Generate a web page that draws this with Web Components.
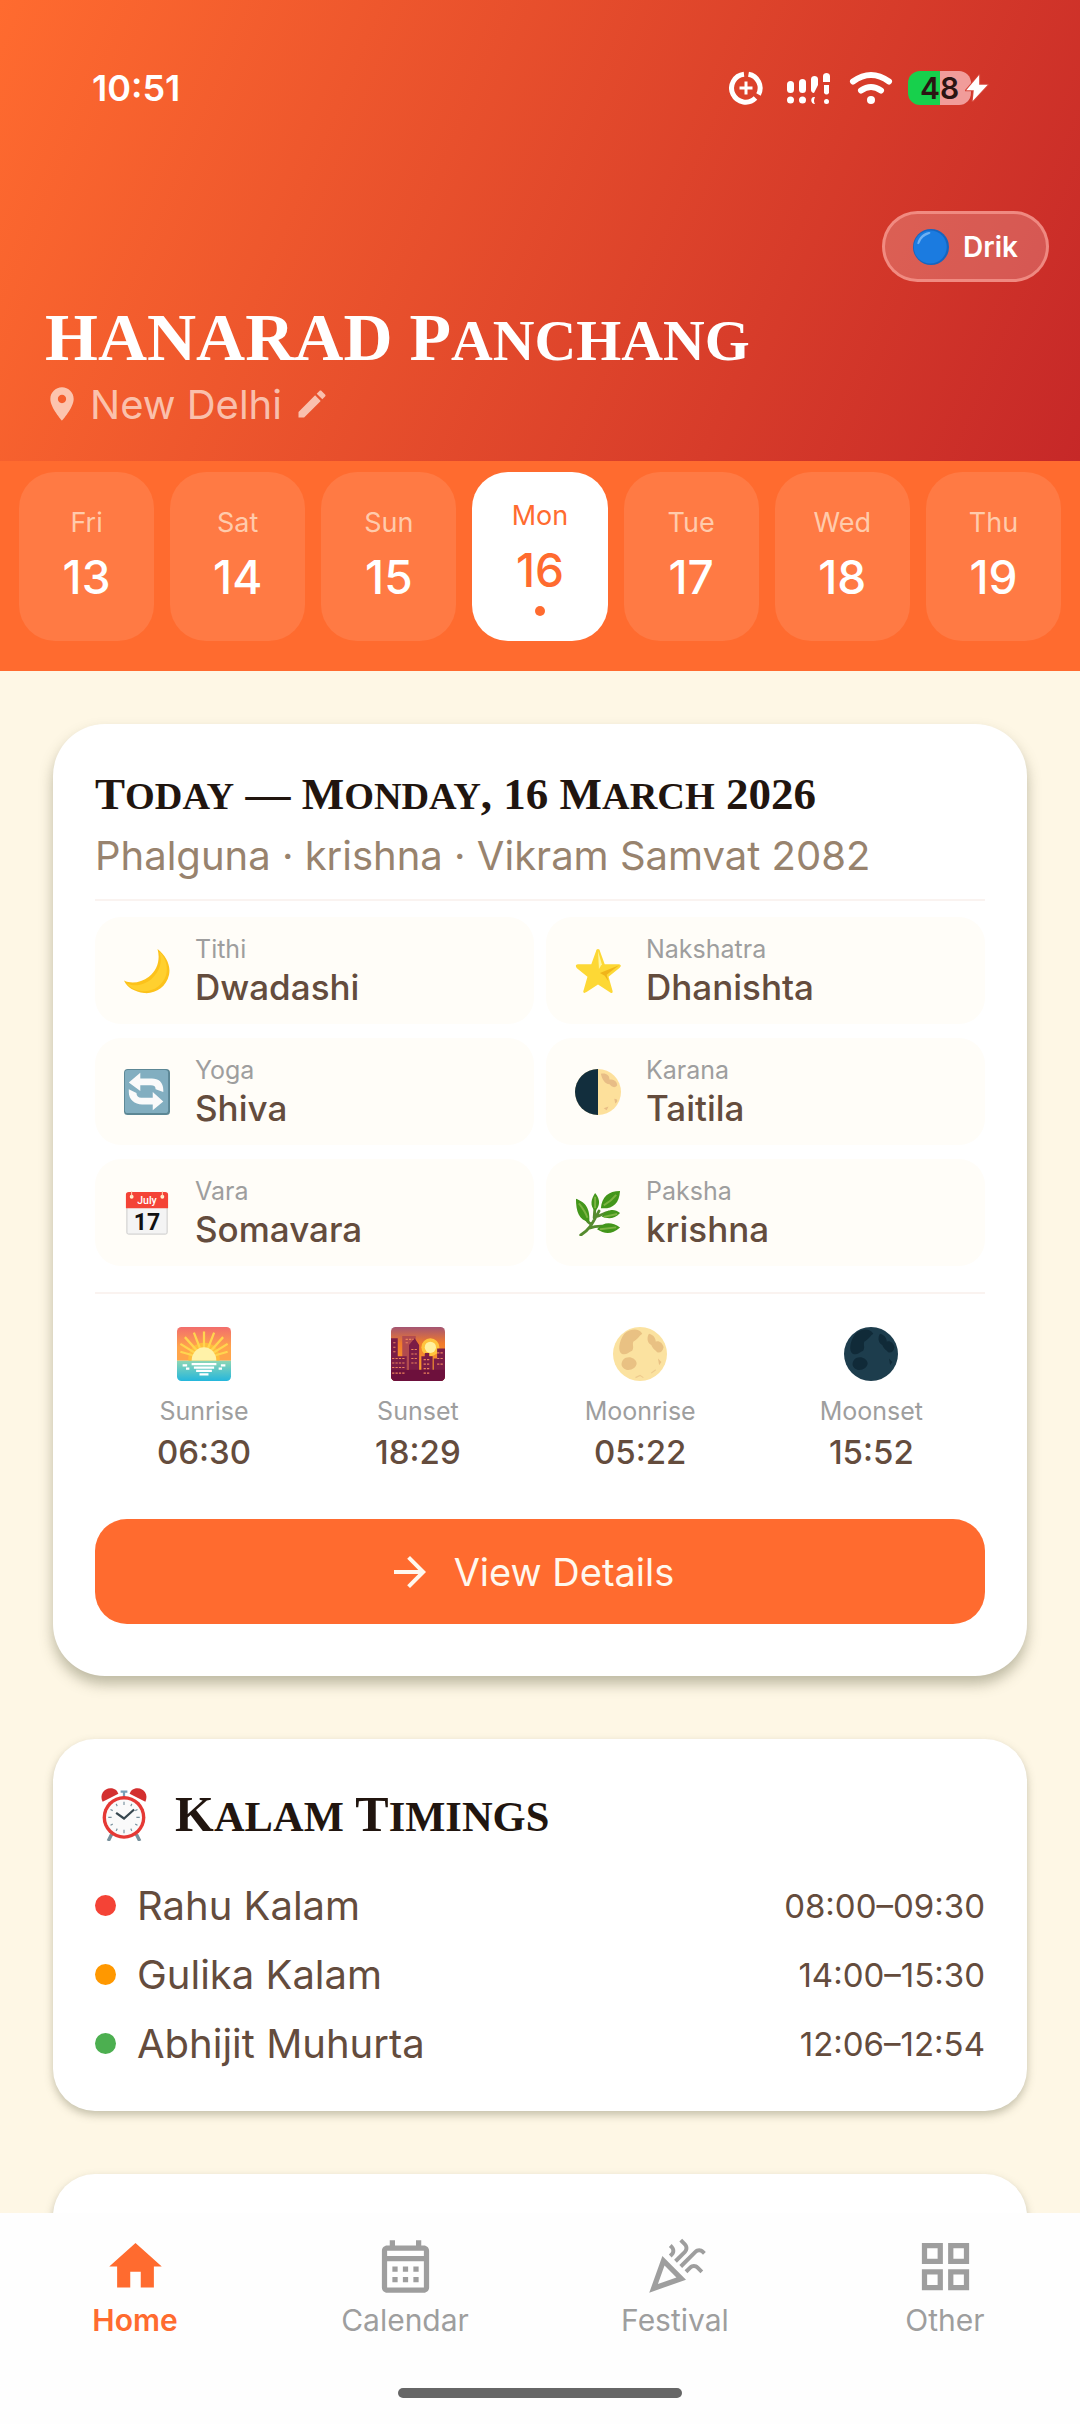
<!DOCTYPE html>
<html lang="en">
<head>
<meta charset="utf-8">
<meta name="viewport" content="width=device-width, initial-scale=1">
<title>HANARAD Panchang</title>
<style>
    body {
        margin: 0;
        background: #fef7e5;
        font-family: Inter, "Open Sans", sans-serif;
        --orange: #ff6b2f;
        --brown: #644c3d;
        --grey: #9e9e9e;
        --serif: "Liberation Serif", serif;
    }
</style>
</head>
<body>
<panchang-app></panchang-app>

<script>
// one colour icons, 24x24 grid
const glyphs = {
    home: "M10 20v-6h4v6h5v-8h3L12 3 2 12h3v8z",
    calendar: "M19 4h-1V2h-2v2H8V2H6v2H5c-1.11 0-1.99.9-1.99 2L3 20c0 1.1.89 2 2 2h14c1.1 0 2-.9 2-2V6c0-1.1-.9-2-2-2zm0 16H5V10h14v10zm0-12H5V6h14v2zM9 14H7v-2h2v2zm4 0h-2v-2h2v2zm4 0h-2v-2h2v2zm-8 4H7v-2h2v2zm4 0h-2v-2h2v2zm4 0h-2v-2h2v2z",
    festival: "M2 22l14-5-9-9-5 14zm10.35-5.82L5.3 18.7l2.52-7.05 4.53 4.53zM14.53 12.53l5.59-5.59c.49-.49 1.28-.49 1.77 0l.59.59 1.06-1.06-.59-.59c-1.07-1.07-2.82-1.07-3.89 0l-5.59 5.59 1.06 1.06zM10.06 6.88l-.59.59 1.06 1.06.59-.59c1.07-1.07 1.07-2.82 0-3.89l-.59-.59-1.06 1.07.59.59c.48.48.48 1.28 0 1.76zM17.06 11.88l-1.59 1.59 1.06 1.06 1.59-1.59c.49-.49 1.28-.49 1.77 0l1.61 1.61 1.06-1.06-1.61-1.61c-1.08-1.07-2.82-1.07-3.89 0zM15.06 5.88l-3.59 3.59 1.06 1.06 3.59-3.59c1.07-1.07 1.07-2.82 0-3.89l-1.59-1.59-1.06 1.06 1.59 1.59c.48.49.48 1.29 0 1.77z",
    other: "M3 3v8h8V3H3zm6 6H5V5h4v4zm-6 4v8h8v-8H3zm6 6H5v-4h4v4zm4-16v8h8V3h-8zm6 6h-4V5h4v4zm-6 4v8h8v-8h-8zm6 6h-4v-4h4v4z",
    place: "M12 2C8.13 2 5 5.13 5 9c0 5.25 7 13 7 13s7-7.75 7-13c0-3.87-3.13-7-7-7zm0 9.5c-1.38 0-2.5-1.12-2.5-2.5s1.12-2.5 2.5-2.5 2.5 1.12 2.5 2.5-1.12 2.5-2.5 2.5z",
    edit: "M3 17.25V21h3.75L17.81 9.94l-3.75-3.75L3 17.25zM20.71 7.04c.39-.39.39-1.02 0-1.41l-2.34-2.34c-.39-.39-1.02-.39-1.41 0l-1.83 1.83 3.75 3.75 1.83-1.83z",
    arrow: "M12 4l-1.41 1.41L16.17 11H4v2h12.17l-5.58 5.59L12 20l8-8z"
};

// coloured pictures, 48x48 grid
const pictures = {
    blue: `<circle cx="24" cy="24" r="24" fill="#1565c0"/><circle cx="23" cy="24" r="22" fill="#1b7be0"/><path d="M6 18C8 11 14 5 21 4c3 0 3 2 0 3C15 9 11 13 9 18c-1 3-4 3-3 0z" fill="#6fb1f3"/>`,
    moon: `<path d="M35 1c9 7 14 17 12 27-3 13-14 20-26 19C11 46 3 41 0 34c8 4 18 2 26-4 9-7 12-18 9-29z" fill="#fcc21b"/><path d="M37 4c7 7 9 16 7 24-3 10-12 17-22 17C12 45 6 41 3 37c9 4 19 1 26-5 9-8 11-18 8-28z" fill="#ffd02f"/>`,
    star: `<path d="M24 1c1 0 2 1 2 2l5 14 14 0c3 0 4 2 1 4L35 30l4 14c1 3-1 4-3 2L24 38 12 46c-3 2-4 0-3-2l4-14L2 21c-2-2-1-4 1-4h14l5-14c0-1 1-2 2-2z" fill="#fdd835"/><path d="M46 18 33 28l2 7-4-6-5-3z" fill="#f0b51a"/><path d="M24 3l4 14-3 5z" fill="#fff59d"/>`,
    cycle: `<rect width="48" height="48" rx="4" fill="#5c8795"/><rect x="1" y="1" width="45" height="45" rx="3" fill="#82aec0"/><path d="M17 4v6h12c7 0 12 4 12 12v2l-8-3c0-3-2-4-5-4H17v6L5 14z" fill="#fafafa"/><path d="M30 43v-6H19C11 37 5 32 5 24v-3l8 4c0 3 2 5 5 5h12v-6l11 10z" fill="#fafafa"/>`,
    half: `<circle cx="24" cy="24" r="24" fill="#fde09b"/><path d="M27 5c6-1 9 2 9 6 5 0 8 2 8 6-3 4-6 1-8-1-5 0-8-6-9-11zM41 31c4 0 4 3 1 5zM30 41l5-2-2 4z" fill="#e8bd86"/><path d="M24 0a24 24 0 0 0 0 48z" fill="#122e3d"/>`,
    page: `<path d="M3 4h42v40c0 2-1 2-2 2H5c-1 0-2 0-2-2z" fill="#f4f4f4" stroke="#c9c9c9"/><path d="M5 2h38c2 0 3 1 3 3v14H2V5c0-2 1-3 3-3z" fill="#f44336"/><circle cx="8" cy="7" r="2" fill="#fff4d0"/><circle cx="40" cy="7" r="2" fill="#fff4d0"/><path d="M8 1v6M40 1v6" stroke="#ffd9b8"/><text x="24" y="15" text-anchor="middle" font-family="Roboto" font-size="11" font-weight="500" fill="#fff">July</text><text x="24" y="42" text-anchor="middle" font-family="Roboto" font-size="24" font-weight="700" fill="#111">17</text>`,
    herb: `<path d="M6 47c10-6 13-14 19-25M17 36c-4-2-5-5-8-9M14 40c6-2 10-3 18-2M21 28c6-1 9-4 14-5M20 29l1-13" fill="none" stroke="#558b2f" stroke-width="3" stroke-linecap="round"/><path d="M1 9c8 3 15 8 14 24C4 32 1 22 1 9zM21 3c6 7 5 14 0 19-6-6-4-13 0-19zM47 1c-1 14-8 19-20 18C28 7 35 1 47 1zM47 24c-6 7-13 6-19 4 5-8 13-9 19-4zM47 39c-9 8-16 7-24 2 7-8 15-8 24-2z" fill="#43961b"/><path d="M4 14c4 5 7 9 9 15M43 5c-4 5-8 8-13 11M30 28l14-3M26 41l17-2M21 7v12" fill="none" stroke="#7cb342" stroke-width="2"/>`,
    sunrise: `<defs><linearGradient id="a" x2="0" y2="1"><stop stop-color="#f26d6d"/><stop offset=".6" stop-color="#ffa54a"/></linearGradient><linearGradient id="b" x2="0" y2="1"><stop stop-color="#8ed6b4"/><stop offset="1" stop-color="#25b7dc"/></linearGradient><clipPath id="c"><rect width="48" height="48" rx="4"/></clipPath></defs><g clip-path="url(#c)"><path d="M0 0h48v30H0z" fill="url(#a)"/><circle cx="24" cy="28" r="14" fill="#ffbd3d"/><path d="M24 28V4M24 28L15 5M24 28L33 5M24 28L7 9M24 28L41 9M24 28L3 15M24 28L45 15M24 28L3 22M24 28L45 22" stroke="#ffd54f" stroke-width="2"/><path d="M13 30a11 12 0 0 1 22 0z" fill="#fff2a8"/><path d="M0 30h48v18H0z" fill="url(#b)"/><path d="M13 33h22M15 36h18M17 39h14M20 42h8M5 34h4M39 34h4M8 37h3M37 37h3" stroke="#fff" stroke-width="2"/></g>`,
    sunset: `<defs><linearGradient id="a" x2="0" y2="1"><stop stop-color="#a45573"/><stop offset=".3" stop-color="#f07a2c"/><stop offset="1" stop-color="#ffb02e"/></linearGradient><clipPath id="c"><rect width="48" height="48" rx="4"/></clipPath></defs><g clip-path="url(#c)"><path d="M0 0h48v48H0z" fill="url(#a)"/><circle cx="35" cy="18" r="8" fill="#ffc43d"/><circle cx="35" cy="18" r="5" fill="#fff1a0"/><path d="M10 8h12v30H10z" fill="#b24b4e"/><path d="M0 10h6v16h8v22H0zM16 16l5-6 4 6v24h-9zM27 26h3v-3h4v3h3v22H27zM38 28h3v-9h7v29H38z" fill="#7b1c45"/><path d="M0 38h48v10H0z" fill="#6d103c"/><path d="M1 28h11M1 32h11M1 36h11M1 41h11M29 29h6M29 33h6M29 37h6M29 41h6M18 20h5M18 24h5M18 28h5M18 32h5M13 11h7M13 14h3M2 14h3M2 18h3M2 22h3M41 23h6M41 28h6M41 33h6" stroke="#ed835c" stroke-dasharray="2 1"/></g>`,
    full: `<circle cx="24" cy="24" r="24" fill="#fbe2a0"/><path d="M10 6c6-5 13-5 16 0-3 2-4 5-8 7-1 3 1 5-1 8-4 2-5 4-9 3-4-2-3-11 2-18zM9 29c4-4 11-2 12 3 0 5-7 8-11 5-3-2-3-5-1-8zM32 6c4 1 6 4 6 7 3-1 6 1 7 5-1 5-5 6-7 3-2-1-3-3-4-5-4-2-4-7-2-10zM40 28l3 3-2 3z" fill="#e9c183"/><path d="M20 45l4-2 3 2M34 41l4-3" stroke="#edca8d" fill="none"/>`,
    dark: `<circle cx="24" cy="24" r="24" fill="#1d3d4d"/><path d="M10 6c6-5 13-5 16 0-3 2-4 5-8 7-1 3 1 5-1 8-4 2-5 4-9 3-4-2-3-11 2-18zM9 29c4-4 11-2 12 3 0 5-7 8-11 5-3-2-3-5-1-8zM32 6c4 1 6 4 6 7 3-1 6 1 7 5-1 5-5 6-7 3-2-1-3-3-4-5-4-2-4-7-2-10zM40 28l3 3-2 3z" fill="#102a38"/>`,
    alarm: `<path d="M13 42l-3 6M35 42l3 6" stroke="#78909c" stroke-width="3"/><path d="M21 4h6M24 4v5" stroke="#78a0b8" stroke-width="2"/><path d="M5 13C2 7 6 1 12 1c4 0 6 2 7 5zM43 13c3-6-1-12-7-12-4 0-6 2-7 5z" fill="#d32f2f"/><circle cx="24" cy="27" r="19" fill="#e53935"/><circle cx="24" cy="27" r="16" fill="#fafafa"/><path d="M24 13v3M24 38v3M10 27h3M35 27h3M17 15l1 2M31 15l-1 2M12 20l2 1M36 20l-2 1M12 34l2-1M36 34l-2-1M17 39l1-2M31 39l-1-2" stroke="#78909c"/><path d="M17 23l7 5 9-8" fill="none" stroke="#37474f" stroke-width="2"/>`
};

/**
 * Wraps every lowercase run so it is drawn as a tall small capital
 */
function smallCaps(text) {
    return text.replace(/[a-z]+/g, "<small>$&</small>");
}

class UiIcon extends HTMLElement {
    constructor() {
        super();
        this.attachShadow({mode: "open"});
    }

    connectedCallback() {
        const name = this.getAttribute("name");
        const size = this.getAttribute("size");
        const body = glyphs[name] ? `<path fill="currentColor" d="${glyphs[name]}"/>` : pictures[name];
        this.shadowRoot.innerHTML = `
        <style>
            :host { display: block; flex: none; }
            svg { display: block; }
        </style>
        <svg width="${size}" height="${size}" viewBox="${glyphs[name] ? "0 0 24 24" : "0 0 48 48"}" aria-hidden="true">${body}</svg>
        `;
    }
}

class StatusBar extends HTMLElement {
    constructor() {
        super();
        this.attachShadow({mode: "open"}).innerHTML = `
        <style>
            :host {
                display: flex;
                justify-content: space-between;
                align-items: center;
                height: 48px;
                padding: 64px 91px 0 92px;
                color: #fff;
            }
            .time { font-size: 36px; font-weight: 600; line-height: 48px; }
            .icons { display: flex; align-items: center; gap: 19px; }
            svg { display: block; }
            .signal { margin-left: 4px; }
            .battery { display: flex; align-items: center; margin-left: -4px; }
            .level {
                width: 63px;
                border-radius: 12px;
                background: linear-gradient(90deg, #17d04c 50%, #f19c9a 50%);
                color: #2b1512;
                font-size: 30px;
                font-weight: 600;
                line-height: 34px;
                text-align: center;
            }
            .bolt { margin-left: -6px; }
        </style>
        <span class="time">10:51</span>
        <div class="icons">
            <svg width="34" height="34" viewBox="0 0 34 34" fill="none" stroke="#fff" stroke-width="5">
                <path d="M19.500 3.200A14 14 0 0 1 29.500 23.500M26.500 27A14 14 0 1 1 15 3.200"/>
                <path d="M17 10.500v13M10.500 17h13" stroke-width="3"/>
            </svg>
            <svg class="signal" width="44" height="34" viewBox="0 0 44 34" fill="#fff">
                <rect x="1" y="10" width="7" height="12" rx="3.500"/><rect x="13" y="8" width="7" height="14" rx="3.500"/>
                <path d="M25 8c0-4 7-4 7 0v6l-4 8c-2 0-3-2-3-3z"/><path d="M37 5c0-4 7-4 7 0v6h-7zM38 14h5v8q-2.500 3-5 0z"/>
                <circle cx="4.500" cy="29" r="3.500"/><circle cx="16.500" cy="29" r="3.500"/><path d="M29 26c-5-1-5 7 0 7q-2-3 0-7z"/><circle cx="40.500" cy="30.500" r="2.500"/>
            </svg>
            <svg width="44" height="34" viewBox="0 0 44 34" fill="none" stroke="#fff" stroke-linecap="round" stroke-width="6">
                <path d="M4 10.500q18-13 36 0M12 19.500q10-7 20 0"/><circle cx="22" cy="29" r="4" fill="#fff" stroke="none"/>
            </svg>
            <div class="battery">
                <span class="level">48</span>
                <svg class="bolt" width="24" height="28" viewBox="0 0 22 26"><path d="M13 1L1 15h7L7 25 21 10h-8z" fill="#fff" stroke="#d8463a" stroke-width="2" paint-order="stroke"/></svg>
            </div>
        </div>
        `;
    }
}

class AppHeader extends HTMLElement {
    constructor() {
        super();
        this.attachShadow({mode: "open"}).innerHTML = `
        <style>
            :host {
                display: block;
                padding-bottom: 29px;
                background: linear-gradient(113deg, #ff6b2f, #c62828);
                color: #fff;
            }
            .tools {
                display: flex;
                justify-content: flex-end;
                padding: 99px 31px 0;
            }
            button { font: inherit; color: inherit; cursor: pointer; }
            .system {
                display: flex;
                align-items: center;
                gap: 14px;
                height: 71px;
                box-sizing: border-box;
                padding: 0 28px;
                border: 3px solid rgba(255, 170, 160, .6);
                border-radius: 36px;
                background: rgba(255, 255, 255, .2);
                font-size: 28px;
                font-weight: 600;
            }
            h1 {
                margin: 16px 45px 0;
                font: 700 68px/78px var(--serif);
            }
            small { font-size: 85%; line-height: 1; text-transform: uppercase; }
            .place {
                display: flex;
                align-items: center;
                gap: 8px;
                height: 56px;
                margin: 0 42px;
                padding: 0;
                border: 0;
                background: none;
                color: rgba(255, 240, 230, .7);
                font-size: 40px;
            }
            .place ui-icon:last-child { margin-left: 4px; }
        </style>
        <slot></slot>
        <div class="tools"><button class="system"><ui-icon name="blue" size="36"></ui-icon>Drik</button></div>
        <h1>${smallCaps("HANARAD Panchang")}</h1>
        <button class="place">
            <ui-icon name="place" size="40"></ui-icon>New Delhi<ui-icon name="edit" size="36"></ui-icon>
        </button>
        `;
    }
}

class WeekStrip extends HTMLElement {
    constructor() {
        super();
        this.attachShadow({mode: "open"});
    }

    set days(value) {
        this._days = value;
        this.render();
    }

    render() {
        this.shadowRoot.innerHTML = `
        <style>
            :host {
                display: grid;
                grid-template-columns: repeat(7, 1fr);
                gap: 16px;
                padding: 11px 19px 30px;
                background: var(--orange);
            }
            button {
                display: flex;
                flex-direction: column;
                align-items: center;
                justify-content: center;
                height: 169px;
                padding: 0;
                border: 0;
                border-radius: 36px;
                background: rgba(255, 255, 255, .1);
                color: #fff;
                font: inherit;
            }
            .name { font-size: 27px; line-height: 36px; color: rgba(255, 240, 220, .7); }
            .date { margin-top: 4px; font-size: 46px; font-weight: 500; line-height: 64px; }
            .on { background: #fff; color: var(--orange); }
            .on .name { color: inherit; }
            .on::after {
                content: "";
                width: 10px;
                height: 10px;
                margin-top: 4px;
                border-radius: 50%;
                background: var(--orange);
            }
        </style>
        ${this._days.map(([name, date, on]) => `
        <button class="${on ? "on" : ""}"><span class="name">${name}</span><span class="date">${date}</span></button>`).join("")}
        `;
    }
}

class BaseCard extends HTMLElement {
    constructor() {
        super();
        this.attachShadow({mode: "open"}).innerHTML = `
        <style>
            :host {
                display: block;
                padding: 42px;
                border-radius: 42px;
                background: #fff;
                box-shadow: 0 4px 8px rgba(90, 90, 60, .35);
            }
            :host([raised]) {
                padding-bottom: 52px;
                border-radius: 52px;
                box-shadow: 0 8px 14px rgba(90, 90, 60, .4);
            }
        </style>
        <slot></slot>
        `;
    }
}

class DetailCell extends HTMLElement {
    constructor() {
        super();
        this.attachShadow({mode: "open"}).innerHTML = `
        <style>
            :host {
                display: flex;
                align-items: center;
                gap: 25px;
                height: 107px;
                padding: 0 29px;
                border-radius: 26px;
                background: #fffdf8;
            }
            .label { color: var(--grey); font-size: 25px; line-height: 32px; }
            .value { color: var(--brown); font-size: 35px; font-weight: 500; line-height: 44px; }
        </style>
        <ui-icon name="${this.getAttribute("icon")}" size="46"></ui-icon>
        <div>
            <div class="label">${this.getAttribute("label")}</div>
            <div class="value">${this.getAttribute("value")}</div>
        </div>
        `;
    }
}

class SkyTime extends HTMLElement {
    constructor() {
        super();
        this.attachShadow({mode: "open"}).innerHTML = `
        <style>
            :host { display: flex; flex-direction: column; align-items: center; }
            .label { margin-top: 12px; color: var(--grey); font-size: 25px; line-height: 36px; }
            .time { margin-top: 2px; color: var(--brown); font-size: 33px; font-weight: 500; line-height: 42px; }
        </style>
        <ui-icon name="${this.getAttribute("icon")}" size="54"></ui-icon>
        <span class="label">${this.getAttribute("label")}</span>
        <span class="time">${this.getAttribute("time")}</span>
        `;
    }
}

class TodayPanel extends HTMLElement {
    constructor() {
        super();
        this.attachShadow({mode: "open"}).innerHTML = `
        <style>
            :host { display: block; }
            h2 {
                margin: 0;
                color: #21150f;
                font: 700 45px/56px var(--serif);
            }
            small { font-size: 85%; line-height: 1; text-transform: uppercase; }
            p { margin: 4px 0 13px; color: #98836e; font-size: 40px; line-height: 60px; }
            hr { margin: 0; border: 0; height: 2px; background: #faf3f0; }
            .details {
                display: grid;
                grid-template-columns: 1fr 1fr;
                gap: 14px 12px;
                margin: 16px 0 26px;
            }
            .sky { display: flex; justify-content: space-around; margin: 33px 0 46px; }
            button {
                display: flex;
                align-items: center;
                justify-content: center;
                gap: 20px;
                width: 100%;
                height: 105px;
                padding: 0 20px 0 0;
                border: 0;
                border-radius: 32px;
                background: var(--orange);
                color: #fff8ee;
                font: inherit;
                font-size: 38px;
            }
        </style>
        <h2>${smallCaps("Today — Monday, 16 March 2026")}</h2>
        <p>Phalguna · krishna · Vikram Samvat 2082</p>
        <hr>
        <div class="details">
            <detail-cell icon="moon" label="Tithi" value="Dwadashi"></detail-cell>
            <detail-cell icon="star" label="Nakshatra" value="Dhanishta"></detail-cell>
            <detail-cell icon="cycle" label="Yoga" value="Shiva"></detail-cell>
            <detail-cell icon="half" label="Karana" value="Taitila"></detail-cell>
            <detail-cell icon="page" label="Vara" value="Somavara"></detail-cell>
            <detail-cell icon="herb" label="Paksha" value="krishna"></detail-cell>
        </div>
        <hr>
        <div class="sky">
            <sky-time icon="sunrise" label="Sunrise" time="06:30"></sky-time>
            <sky-time icon="sunset" label="Sunset" time="18:29"></sky-time>
            <sky-time icon="full" label="Moonrise" time="05:22"></sky-time>
            <sky-time icon="dark" label="Moonset" time="15:52"></sky-time>
        </div>
        <button><ui-icon name="arrow" size="48"></ui-icon>View Details</button>
        `;
    }
}

class KalamTimings extends HTMLElement {
    constructor() {
        super();
        this.attachShadow({mode: "open"});
    }

    set timings(value) {
        this._timings = value;
        this.render();
    }

    render() {
        this.shadowRoot.innerHTML = `
        <style>
            :host { display: block; }
            header { display: flex; align-items: center; gap: 24px; height: 66px; margin-bottom: 24px; padding-left: 2px; }
            h2 {
                margin: 0;
                color: #21150f;
                font: 700 50px/66px var(--serif);
            }
            small { font-size: 85%; line-height: 1; text-transform: uppercase; }
            ul { margin: 0 0 -9px; padding: 0; list-style: none; }
            li {
                display: flex;
                align-items: center;
                gap: 21px;
                height: 69px;
                color: var(--brown);
                font-size: 40px;
            }
            i { width: 21px; height: 21px; border-radius: 50%; }
            time { margin-left: auto; font-size: 33px; }
        </style>
        <header><ui-icon name="alarm" size="54"></ui-icon><h2>${smallCaps("Kalam Timings")}</h2></header>
        <ul>
            ${this._timings.map(([name, time, color]) => `
            <li><i style="background: ${color}"></i>${name}<time>${time}</time></li>`).join("")}
        </ul>
        `;
    }
}

class BottomNav extends HTMLElement {
    constructor() {
        super();
        this.attachShadow({mode: "open"}).innerHTML = `
        <style>
            :host { display: block; padding: 22px 0 26px; background: #fefefe; }
            nav { display: grid; grid-template-columns: repeat(4, 1fr); }
            a {
                display: flex;
                flex-direction: column;
                align-items: center;
                color: var(--grey);
                font-size: 30px;
                line-height: 44px;
                text-decoration: none;
            }
            a.on { color: var(--orange); font-weight: 600; }
            .handle {
                width: 284px;
                height: 10px;
                margin: 46px auto 0;
                border-radius: 5px;
                background: #666;
            }
        </style>
        <nav>
            <a class="on" href="#home"><ui-icon name="home" size="63"></ui-icon>Home</a>
            <a href="#calendar"><ui-icon name="calendar" size="63"></ui-icon>Calendar</a>
            <a href="#festival"><ui-icon name="festival" size="63"></ui-icon>Festival</a>
            <a href="#other"><ui-icon name="other" size="63"></ui-icon>Other</a>
        </nav>
        <div class="handle"></div>
        `;
    }
}

class PanchangApp extends HTMLElement {
    constructor() {
        super();
        this.attachShadow({mode: "open"}).innerHTML = `
        <style>
            :host { display: flex; flex-direction: column; height: 100vh; overflow: hidden; }
            app-header, week-strip, bottom-nav { flex: none; }
            main {
                flex: 1;
                display: flex;
                flex-direction: column;
                gap: 63px;
                min-height: 0;
                padding: 53px 53px 0;
                overflow: hidden;
            }
            base-card { flex: none; }
        </style>
        <app-header><status-bar></status-bar></app-header>
        <week-strip></week-strip>
        <main>
            <base-card raised><today-panel></today-panel></base-card>
            <base-card><kalam-timings></kalam-timings></base-card>
            <base-card></base-card>
        </main>
        <bottom-nav></bottom-nav>
        `;
    }

    connectedCallback() {
        this.shadowRoot.querySelector("week-strip").days = [
            ["Fri", 13], ["Sat", 14], ["Sun", 15], ["Mon", 16, true], ["Tue", 17], ["Wed", 18], ["Thu", 19]
        ];
        this.shadowRoot.querySelector("kalam-timings").timings = [
            ["Rahu Kalam", "08:00–09:30", "#f44336"],
            ["Gulika Kalam", "14:00–15:30", "#ff9800"],
            ["Abhijit Muhurta", "12:06–12:54", "#4caf50"]
        ];
    }
}

customElements.define("ui-icon", UiIcon);
customElements.define("status-bar", StatusBar);
customElements.define("app-header", AppHeader);
customElements.define("week-strip", WeekStrip);
customElements.define("base-card", BaseCard);
customElements.define("detail-cell", DetailCell);
customElements.define("sky-time", SkyTime);
customElements.define("today-panel", TodayPanel);
customElements.define("kalam-timings", KalamTimings);
customElements.define("bottom-nav", BottomNav);
customElements.define("panchang-app", PanchangApp);
</script>
</body>
</html>
